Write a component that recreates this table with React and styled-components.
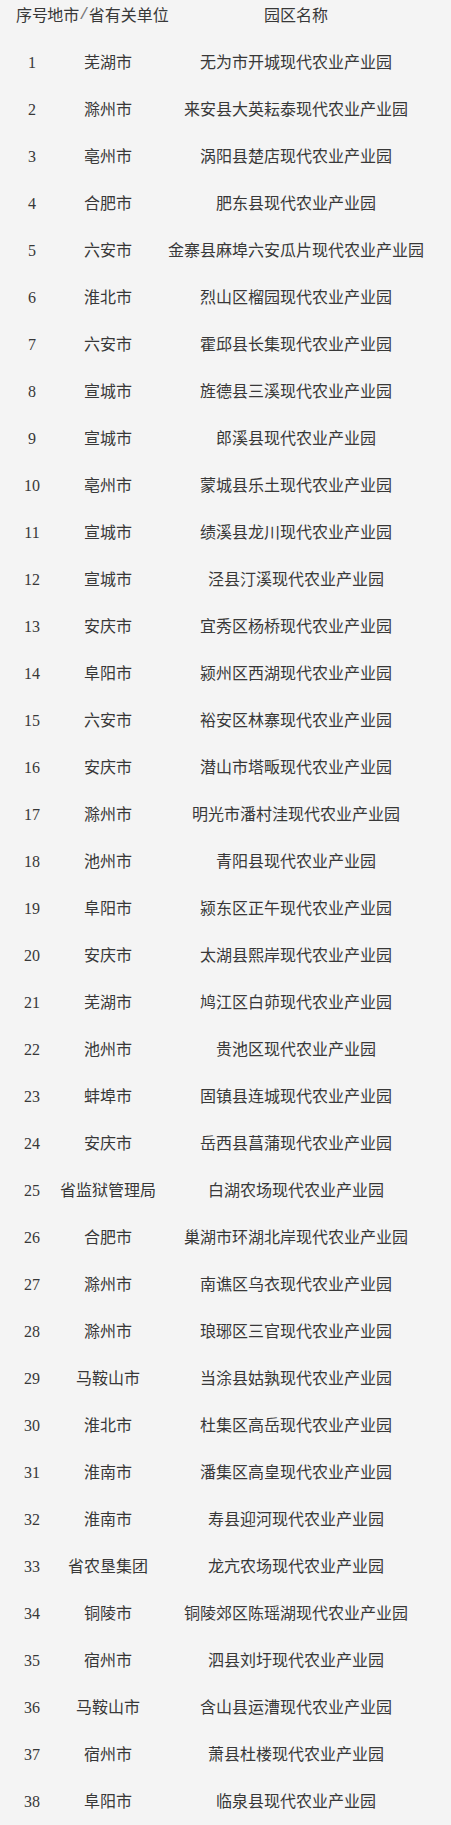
import React from "react";
import styled, { createGlobalStyle } from "styled-components";

const rows = [
  ["芜湖市", "无为市开城现代农业产业园"],
  ["滁州市", "来安县大英耘泰现代农业产业园"],
  ["亳州市", "涡阳县楚店现代农业产业园"],
  ["合肥市", "肥东县现代农业产业园"],
  ["六安市", "金寨县麻埠六安瓜片现代农业产业园"],
  ["淮北市", "烈山区榴园现代农业产业园"],
  ["六安市", "霍邱县长集现代农业产业园"],
  ["宣城市", "旌德县三溪现代农业产业园"],
  ["宣城市", "郎溪县现代农业产业园"],
  ["亳州市", "蒙城县乐土现代农业产业园"],
  ["宣城市", "绩溪县龙川现代农业产业园"],
  ["宣城市", "泾县汀溪现代农业产业园"],
  ["安庆市", "宜秀区杨桥现代农业产业园"],
  ["阜阳市", "颍州区西湖现代农业产业园"],
  ["六安市", "裕安区林寨现代农业产业园"],
  ["安庆市", "潜山市塔畈现代农业产业园"],
  ["滁州市", "明光市潘村洼现代农业产业园"],
  ["池州市", "青阳县现代农业产业园"],
  ["阜阳市", "颍东区正午现代农业产业园"],
  ["安庆市", "太湖县熙岸现代农业产业园"],
  ["芜湖市", "鸠江区白茆现代农业产业园"],
  ["池州市", "贵池区现代农业产业园"],
  ["蚌埠市", "固镇县连城现代农业产业园"],
  ["安庆市", "岳西县菖蒲现代农业产业园"],
  ["省监狱管理局", "白湖农场现代农业产业园"],
  ["合肥市", "巢湖市环湖北岸现代农业产业园"],
  ["滁州市", "南谯区乌衣现代农业产业园"],
  ["滁州市", "琅琊区三官现代农业产业园"],
  ["马鞍山市", "当涂县姑孰现代农业产业园"],
  ["淮北市", "杜集区高岳现代农业产业园"],
  ["淮南市", "潘集区高皇现代农业产业园"],
  ["淮南市", "寿县迎河现代农业产业园"],
  ["省农垦集团", "龙亢农场现代农业产业园"],
  ["铜陵市", "铜陵郊区陈瑶湖现代农业产业园"],
  ["宿州市", "泗县刘圩现代农业产业园"],
  ["马鞍山市", "含山县运漕现代农业产业园"],
  ["宿州市", "萧县杜楼现代农业产业园"],
  ["阜阳市", "临泉县现代农业产业园"],
];

const GlobalStyle = createGlobalStyle`
  body {
    margin: 0;
    background: #f4f4f4;
  }
`;

const Table = styled.div`
  width: 451px;
  height: 1825px;
  background: #f4f4f4;
  color: #383838;
  font-family: "Liberation Serif", "Noto Sans CJK SC", serif;
  font-size: 16px;
`;

const Row = styled.div`
  display: grid;
  grid-template-columns: 64px 88px 288px;
  height: ${(p) => (p.$head ? "39px" : "47px")};
  line-height: ${(p) => (p.$head ? "31px" : "47px")};
`;

const Cell = styled.div`
  display: flex;
  justify-content: center;
  white-space: nowrap;
`;

const Slash = styled.span`
  font-family: "Liberation Mono", monospace;
  color: #777;
`;

export default function App() {
  return (
    <>
      <GlobalStyle />
      <Table>
        <Row $head>
          <Cell>序号</Cell>
          <Cell>
            地市<Slash>/</Slash>省有关单位
          </Cell>
          <Cell>园区名称</Cell>
        </Row>
        {rows.map(([city, park], i) => (
          <Row key={i}>
            <Cell>{i + 1}</Cell>
            <Cell>{city}</Cell>
            <Cell>{park}</Cell>
          </Row>
        ))}
      </Table>
    </>
  );
}
